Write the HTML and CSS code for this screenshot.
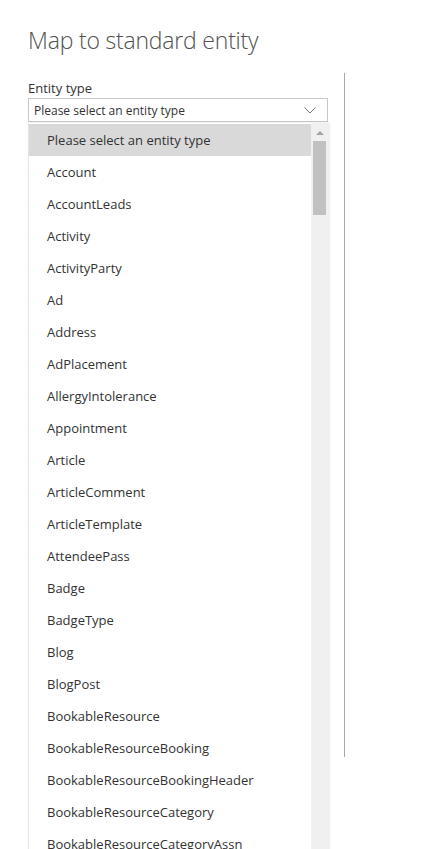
FILE: index.html
```html
<!DOCTYPE html>
<html>
<head>
<meta charset="utf-8">
<link rel="stylesheet" href="styles.css">
</head>
<body>
<div class="page">
  <h1 class="title">Map to standard entity</h1>
  <div class="content">
    <div class="form">
      <div class="label">Entity type</div>
      <div class="select">
        <span class="select-text">Please select an entity type</span>
        <svg class="chevron" width="12" height="7" viewBox="0 0 12 7"><path d="M0.5 0.5 L6 6 L11.5 0.5" fill="none" stroke="#7a7a7a" stroke-width="1"/></svg>
      </div>
      <div class="list">
        <ul class="options">
          <li class="option selected">Please select an entity type</li>
          <li class="option">Account</li>
          <li class="option">AccountLeads</li>
          <li class="option">Activity</li>
          <li class="option">ActivityParty</li>
          <li class="option">Ad</li>
          <li class="option">Address</li>
          <li class="option">AdPlacement</li>
          <li class="option">AllergyIntolerance</li>
          <li class="option">Appointment</li>
          <li class="option">Article</li>
          <li class="option">ArticleComment</li>
          <li class="option">ArticleTemplate</li>
          <li class="option">AttendeePass</li>
          <li class="option">Badge</li>
          <li class="option">BadgeType</li>
          <li class="option">Blog</li>
          <li class="option">BlogPost</li>
          <li class="option">BookableResource</li>
          <li class="option">BookableResourceBooking</li>
          <li class="option">BookableResourceBookingHeader</li>
          <li class="option">BookableResourceCategory</li>
          <li class="option">BookableResourceCategoryAssn</li>
        </ul>
        <div class="scrollbar">
          <div class="arrow"></div>
          <div class="thumb"></div>
        </div>
      </div>
    </div>
    <div class="divider"></div>
  </div>
</div>
</body>
</html>
```
FILE: styles.css
```css
html, body {
  margin: 0;
  padding: 0;
  background: #fff;
  height: 849px;
  overflow: hidden;
}
body {
  font-family: "Open Sans", "Noto Sans", sans-serif;
  color: #333;
}
.page {
  padding-left: 28px;
}
.title {
  margin: 0;
  padding-top: 25px;
  height: 73px;
  box-sizing: border-box;
  font-size: 23px;
  font-weight: 300;
  line-height: 30px;
  color: #505050;
  letter-spacing: -0.2px;
}
.content {
  display: flex;
  align-items: flex-start;
  gap: 16px;
}
.form {
  width: 300px;
  padding-top: 6px;
}
.label {
  font-size: 13px;
  line-height: 19px;
  color: #333;
}
.select {
  height: 24px;
  box-sizing: border-box;
  border: 1px solid #c8c8c8;
  display: flex;
  align-items: center;
  justify-content: space-between;
  padding: 0 11px 0 5px;
}
.select-text {
  font-size: 12px;
  color: #333;
}
.chevron {
  display: block;
}
.list {
  margin-top: 1px;
  display: flex;
  border-left: 1px solid #e6e6e6;
  box-shadow: 1px 0 3px rgba(0,0,0,0.12);
  height: 760px;
  overflow: hidden;
  background: #fff;
}
.options {
  list-style: none;
  margin: 0;
  padding: 1px 0 0 0;
  flex: 1;
}
.option {
  height: 32px;
  line-height: 32px;
  padding-left: 18px;
  font-size: 13px;
  color: #333;
  white-space: nowrap;
}
.option.selected {
  background: #d9d9d9;
}
.scrollbar {
  width: 17px;
  background: #f0f0f0;
  display: flex;
  flex-direction: column;
  align-items: center;
}
.arrow {
  margin-top: 8px;
  width: 0;
  height: 0;
  border-left: 4px solid transparent;
  border-right: 4px solid transparent;
  border-bottom: 4px solid #a3a3a3;
}
.thumb {
  margin-top: 6px;
  width: 13px;
  height: 74px;
  background: #c1c1c1;
}
.divider {
  width: 1px;
  height: 684px;
  background: #a8a8a8;
}
```
